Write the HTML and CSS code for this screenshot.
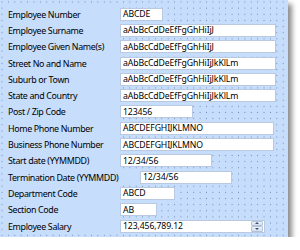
FILE: index.html
```html
<!DOCTYPE html>
<html>
<head>
<meta charset="utf-8">
<link rel="stylesheet" href="styles.css">
</head>
<body>
<div class="panel">
  <div class="form">
    <div class="row"><span class="label">Employee Number</span><span class="box w-number">ABCDE</span></div>
    <div class="row"><span class="label">Employee Surname</span><span class="box w-long">aAbBcCdDeEfFgGhHiIjJ</span></div>
    <div class="row"><span class="label">Employee Given Name(s)</span><span class="box w-long">aAbBcCdDeEfFgGhHiIjJ</span></div>
    <div class="row"><span class="label">Street No and Name</span><span class="box w-long">aAbBcCdDeEfFgGhHiIjJkKlLm</span></div>
    <div class="row"><span class="label">Suburb or Town</span><span class="box w-long">aAbBcCdDeEfFgGhHiIjJkKlLm</span></div>
    <div class="row"><span class="label">State and Country</span><span class="box w-long">aAbBcCdDeEfFgGhHiIjJkKlLm</span></div>
    <div class="row"><span class="label">Post / Zip Code</span><span class="box w-post">123456</span></div>
    <div class="row"><span class="label">Home Phone Number</span><span class="box w-phone">ABCDEFGHIJKLMNO</span></div>
    <div class="row"><span class="label">Business Phone Number</span><span class="box w-phone">ABCDEFGHIJKLMNO</span></div>
    <div class="row"><span class="label">Start date (YYMMDD)</span><span class="box w-date">12/34/56</span></div>
    <div class="row"><span class="label label-wide">Termination Date (YYMMDD)</span><span class="box w-date">12/34/56</span></div>
    <div class="row"><span class="label">Department Code</span><span class="box w-dept">ABCD</span></div>
    <div class="row"><span class="label">Section Code</span><span class="box w-section">AB</span></div>
    <div class="row"><span class="label">Employee Salary</span><span class="box w-salary"><span class="value">123,456,789.12</span><span class="spin"><span class="spin-btn"><span class="tri up"></span></span><span class="spin-btn"><span class="tri down"></span></span></span></span></div>
  </div>
</div>
</body>
</html>
```

FILE: styles.css
```css
html, body {
  margin: 0;
  padding: 0;
  background: #ffffff;
}

.panel {
  width: 288px;
  height: 237px;
  box-sizing: border-box;
  padding: 6px 0 0 5px;
  background-color: #c6ddfc;
  background-image: radial-gradient(circle, #7088b4 0.7px, transparent 0.9px);
  background-size: 6.4px 6.15px;
  background-position: -1.2px -1.1px;
  box-shadow: 4px 4px 5px rgba(0, 0, 0, 0.45);
  font-family: "Noto Sans", "Open Sans", sans-serif;
  font-size: 8.9px;
  letter-spacing: -0.35px;
  color: #000000;
}

.form {
  display: grid;
  grid-auto-rows: 16.3px;
}

.row {
  display: flex;
  align-items: center;
}

.label {
  box-sizing: border-box;
  width: 115px;
  height: 100%;
  padding-left: 3px;
  display: flex;
  align-items: center;
  background: #c6ddfc;
  white-space: nowrap;
}

.label-wide {
  width: 135px;
}

.box {
  box-sizing: border-box;
  height: 13px;
  display: flex;
  align-items: center;
  padding-left: 2px;
  background: #ffffff;
  border: 1px solid #b9c9e2;
  white-space: nowrap;
  overflow: hidden;
  font-size: 8.7px;
  letter-spacing: -0.12px;
}

.w-number { width: 43px; }
.w-long { width: 156px; }
.w-post { width: 73px; }
.w-phone { width: 154px; }
.w-date { width: 92px; }
.w-dept { width: 55px; }
.w-section { width: 37px; }
.w-salary { width: 145px; padding-right: 0; }

.value {
  flex: 1;
}

.spin {
  display: flex;
  flex-direction: column;
  width: 12px;
  height: 11px;
  margin-right: 1px;
}

.spin-btn {
  flex: 1;
  display: flex;
  align-items: center;
  justify-content: center;
  background: linear-gradient(#eef3fa, #d3deee);
  border: 1px solid #b4c3da;
  border-radius: 1px;
  box-sizing: border-box;
}

.tri {
  width: 0;
  height: 0;
  border-left: 2px solid transparent;
  border-right: 2px solid transparent;
}

.tri.up { border-bottom: 2px solid #3d4f6e; }
.tri.down { border-top: 2px solid #3d4f6e; }
```
